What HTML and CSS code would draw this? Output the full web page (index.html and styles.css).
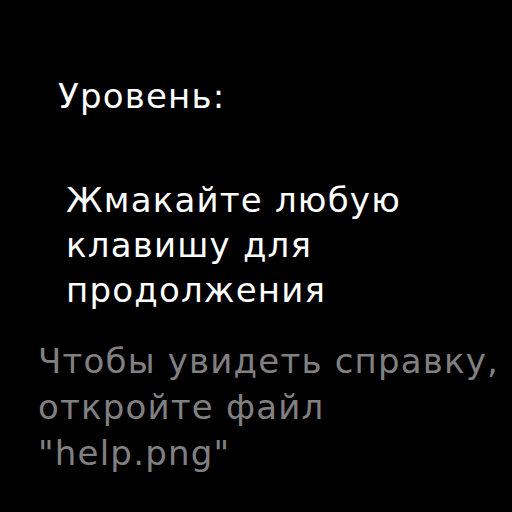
FILE: index.html
```html
<!DOCTYPE html>
<html lang="ru">
<head>
<meta charset="utf-8">
<link rel="stylesheet" href="styles.css">
</head>
<body>
<div class="screen">
  <div class="level">Уровень:</div>
  <div class="prompt">Жмакайте любую<br>клавишу для<br>продолжения</div>
  <div class="help">Чтобы увидеть справку,<br>откройте файл<br>"help.png"</div>
</div>
</body>
</html>
```
FILE: styles.css
```css
html, body {
  margin: 0;
  padding: 0;
  background: #000;
}
.screen {
  width: 512px;
  height: 512px;
  background: #000;
  font-family: "DejaVu Sans", sans-serif;
  font-size: 34px;
  letter-spacing: 1.2px;
  color: #fff;
  white-space: nowrap;
}
.level {
  padding: 76px 0 0 58px;
  line-height: 40px;
}
.prompt {
  padding: 62px 0 0 66px;
  line-height: 45px;
}
.help {
  padding: 25px 0 0 38px;
  line-height: 46px;
  color: #808080;
}
```
